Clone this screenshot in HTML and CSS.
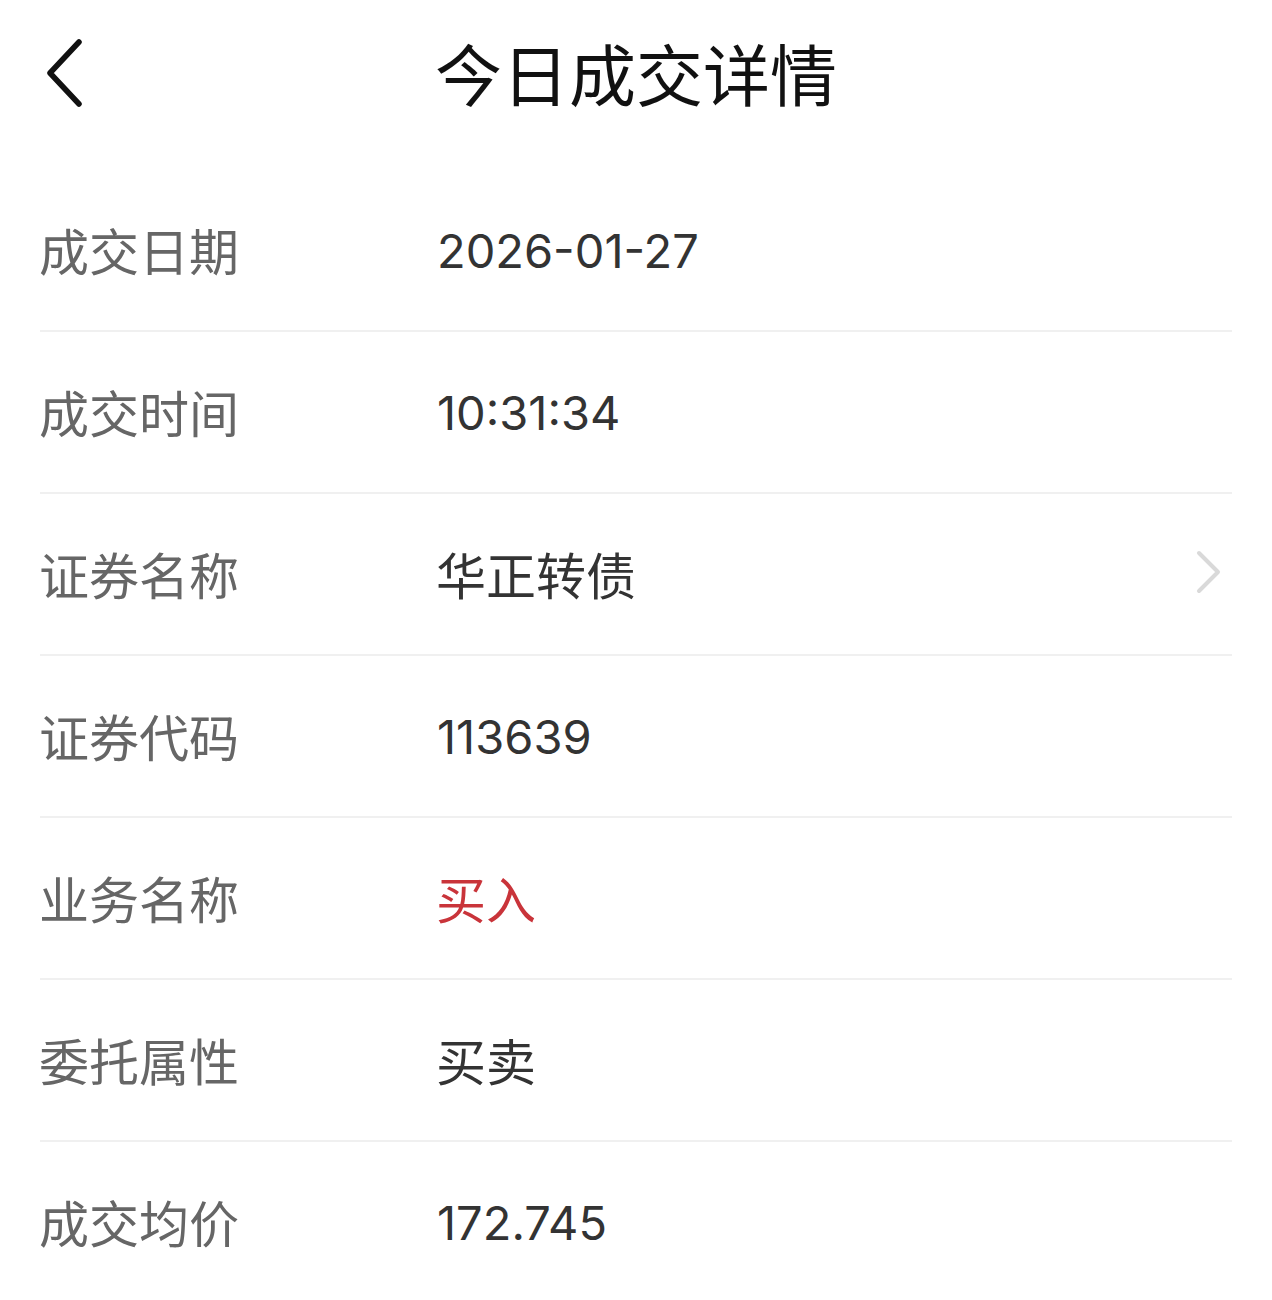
FILE: index.html
```html
<!DOCTYPE html>
<html lang="zh-CN">
<head>
<meta charset="utf-8">
<title>今日成交详情</title>
<link rel="stylesheet" href="styles.css">
</head>
<body>
<div class="page">
  <header class="topbar">
    <span class="back">
      <svg width="44" height="70" viewBox="0 0 44 70"><polyline points="37,5 8,36 37,67" fill="none" stroke="#111" stroke-width="5.5" stroke-linecap="round" stroke-linejoin="round"/></svg>
    </span>
    <h1 class="title">今日成交详情</h1>
  </header>
  <div class="list">
    <div class="row"><span class="label">成交日期</span><span class="value num">2026-01-27</span></div>
    <div class="row"><span class="label">成交时间</span><span class="value num">10:31:34</span></div>
    <div class="row"><span class="label">证券名称</span><span class="value">华正转债</span>
      <span class="arrow"><svg width="30" height="48" viewBox="0 0 30 48"><polyline points="5,4 24,23 5,42" fill="none" stroke="#d9d9d9" stroke-width="4" stroke-linecap="round" stroke-linejoin="round"/></svg></span>
    </div>
    <div class="row"><span class="label">证券代码</span><span class="value num">113639</span></div>
    <div class="row"><span class="label">业务名称</span><span class="value red">买入</span></div>
    <div class="row"><span class="label">委托属性</span><span class="value">买卖</span></div>
    <div class="row"><span class="label">成交均价</span><span class="value num">172.745</span></div>
  </div>
</div>
</body>
</html>
```
FILE: styles.css
```css
html, body {
  margin: 0;
  padding: 0;
  background: #ffffff;
}
body {
  font-family: "Noto Sans CJK SC", "Noto Sans", sans-serif;
}
.page {
  width: 1272px;
}
.topbar {
  position: relative;
  height: 142px;
  display: flex;
  align-items: center;
  justify-content: center;
  margin-bottom: 28px;
}
.back {
  position: absolute;
  left: 42px;
  top: 37px;
  display: block;
  line-height: 0;
}
.title {
  margin: 0;
  font-size: 67px;
  font-weight: 400;
  color: #111;
  line-height: 1;
}
.list {
  padding: 0 40px;
}
.row {
  display: flex;
  align-items: center;
  box-sizing: border-box;
  height: 162px;
  padding-bottom: 3px;
  border-bottom: 2px solid #f0f0f0;
}
.label {
  width: 397px;
  margin-left: -1px;
  font-size: 50px;
  color: #666;
  line-height: 1;
}
.value {
  flex: 1;
  font-size: 50px;
  color: #333;
  line-height: 1;
}
.num {
  font-family: "Inter", "Roboto", sans-serif;
  font-size: 47px;
  margin-left: 1px;
  padding-top: 4px;
}
.red {
  color: #c9343a;
}
.arrow {
  line-height: 0;
  margin-right: 8px;
}
```
